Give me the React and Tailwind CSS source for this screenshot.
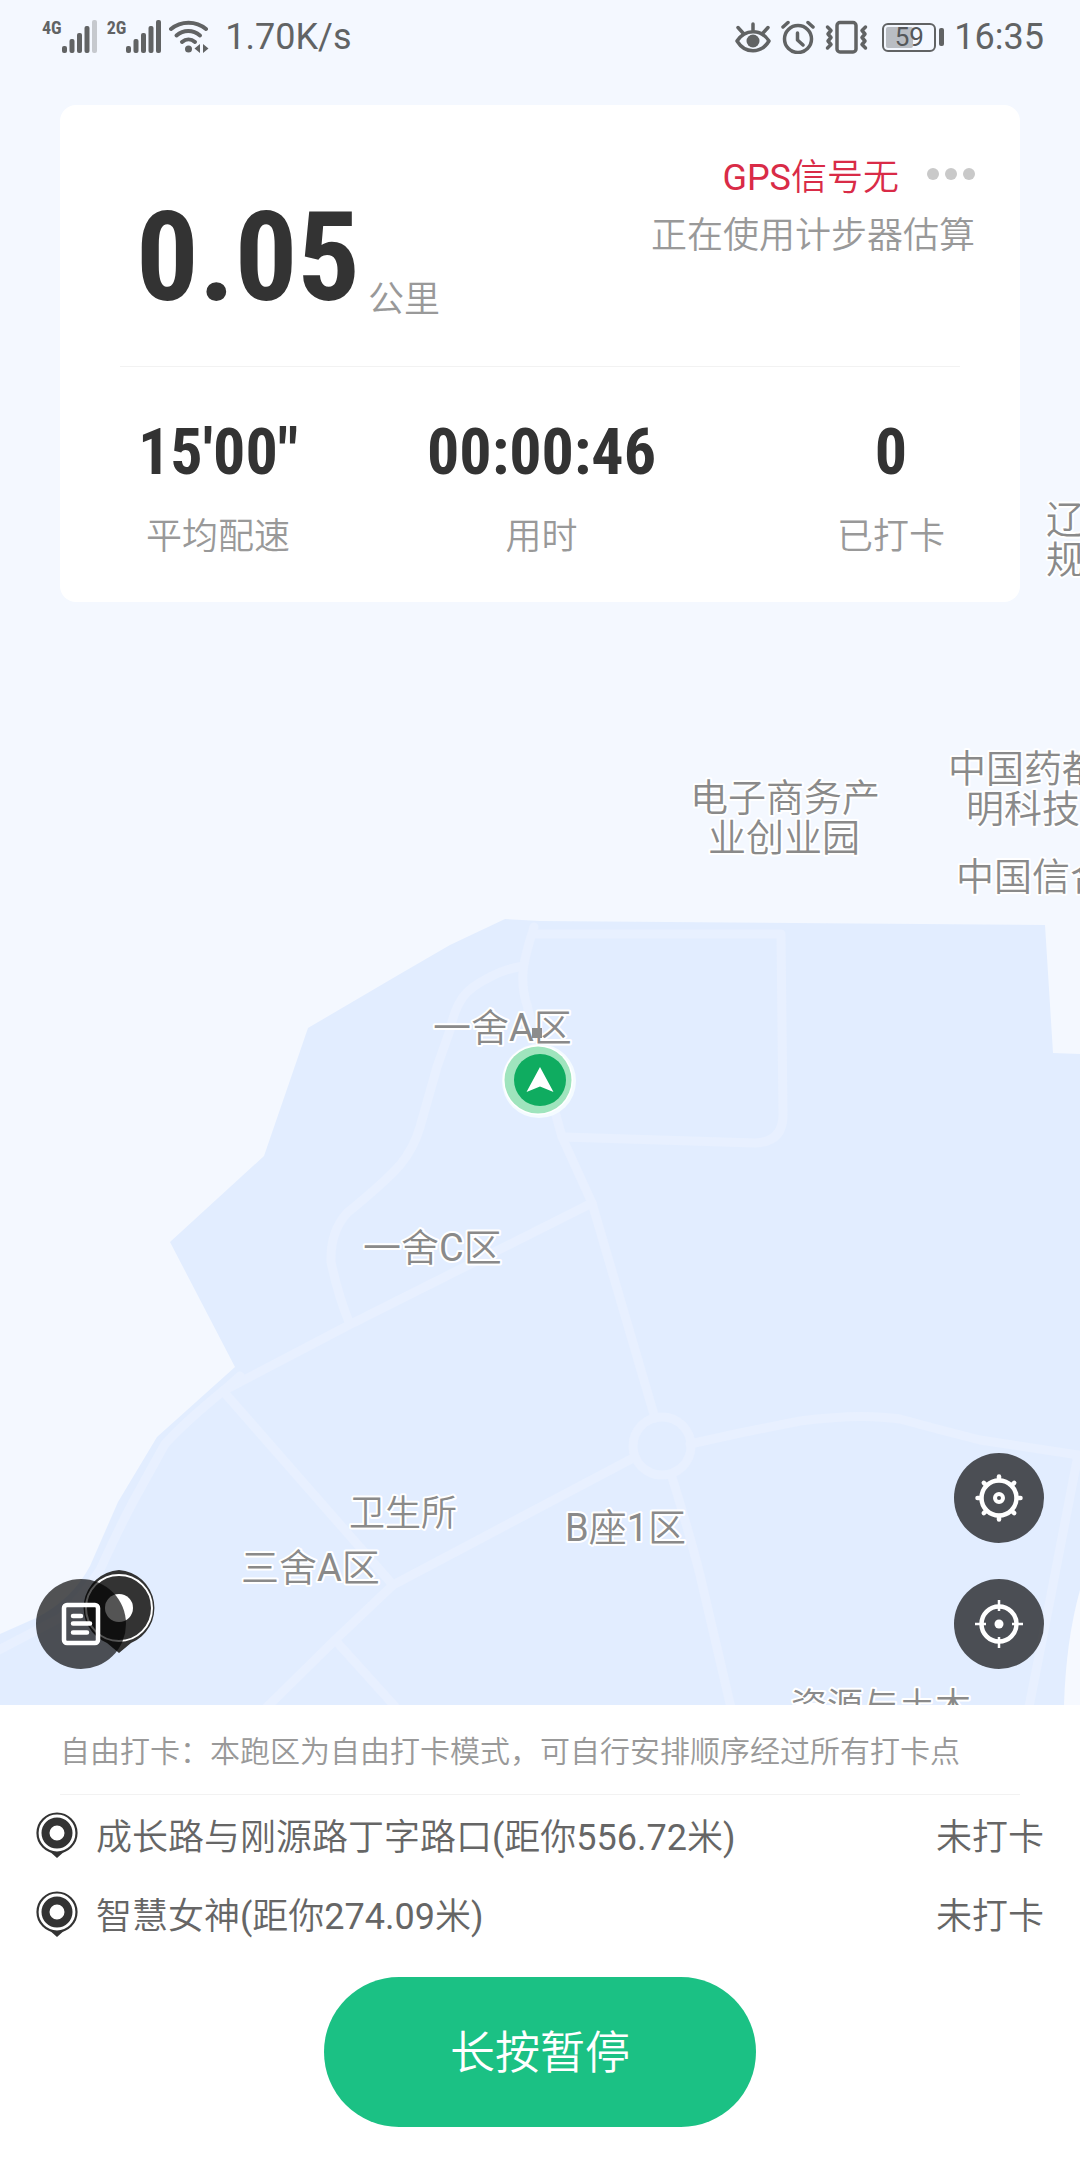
import React from "react";

const CJK = "font-['Roboto','Noto_Sans_CJK_SC_DemiLight','Noto_Sans_CJK_SC_Light','Noto_Sans_CJK_SC',sans-serif]";
const NUM = "font-['Roboto_Condensed','Liberation_Sans_Narrow','Liberation_Sans',sans-serif]";

function Signal({ label, faded }) {
  const bars = [7, 14, 20, 27, 33];
  return (
    <div className="flex items-start">
      <span className={`${NUM} text-[18px] leading-[16px] font-bold`}>{label}</span>
      <svg width="35" height="34" viewBox="0 0 35 34" aria-hidden="true">
        {bars.map((h, i) => (
          <rect
            key={h}
            x={i * 7.5}
            y={33 - h}
            width="5"
            height={h}
            rx="2"
            fill={faded && i === 4 ? "#c6c9ce" : "#616364"}
          />
        ))}
      </svg>
    </div>
  );
}

function WifiIcon() {
  return (
    <svg width="40" height="34" viewBox="0 0 40 34" fill="none" stroke="#616364" strokeWidth="4" strokeLinecap="round" aria-hidden="true">
      <path d="M2 9C12 0.5 27 0.5 37 9" />
      <path d="M7.500 15.500C14.500 9.500 24 9.500 31 15.500" />
      <path d="M13 22C17 18.500 22 18.500 26 22" />
      <circle cx="19.500" cy="29" r="3.500" fill="#616364" stroke="none" />
      <path d="M31 24V33L25.500 28.500ZM34 24V33L39.500 28.500Z" fill="#616364" stroke="none" />
    </svg>
  );
}

function EyeIcon() {
  return (
    <svg width="36" height="34" viewBox="0 0 36 34" fill="none" stroke="#616364" strokeWidth="3.500" strokeLinecap="round" aria-hidden="true">
      <path d="M2 21C10 8.500 26 8.500 34 21C26 34 10 34 2 21Z" strokeLinejoin="round" />
      <path d="M18 10V4M8 13L3 7.500M28 13L33 7.500" />
      <circle cx="18" cy="21" r="6.500" fill="#616364" stroke="none" />
    </svg>
  );
}

function AlarmIcon() {
  return (
    <svg width="34" height="34" viewBox="0 0 34 34" fill="none" stroke="#616364" strokeWidth="3.500" strokeLinecap="round" strokeLinejoin="round" aria-hidden="true">
      <circle cx="17" cy="19" r="13.500" />
      <path d="M2 7L7 2.500M32 7L27 2.500M16.500 13V20L22 25" />
    </svg>
  );
}

function VibrateIcon() {
  return (
    <svg width="43" height="34" viewBox="0 0 43 34" fill="none" stroke="#616364" strokeWidth="3.500" strokeLinejoin="round" strokeLinecap="round" aria-hidden="true">
      <rect x="12" y="2.500" width="19" height="29.500" rx="3" />
      <path d="M2.500 7L6 10.500L3 14L6 17.500L3 21L6 24.500L2.500 28" />
      <path d="M40.500 7L37 10.500L40 14L37 17.500L40 21L37 24.500L40.500 28" />
    </svg>
  );
}

function Battery() {
  return (
    <div className="flex items-center gap-[3px]">
      <div className="relative flex h-[29px] w-[54px] items-center justify-center rounded-[6px] border-2 border-[#616364]">
        <div className="absolute top-[2px] bottom-[2px] left-[2px] w-[27px] rounded-[2px] bg-[#b9bdc3]" />
        <span className="relative text-[26px] leading-[26px] text-[#55585b]">59</span>
      </div>
      <div className="h-[18px] w-[5px] rounded-[2px] bg-[#616364]" />
    </div>
  );
}

function StatusBar() {
  return (
    <header className="relative flex h-[74px] items-center justify-between pr-9 pl-[42px] text-[36px] leading-[42px] text-[#616364]">
      <div className="flex items-center">
        <Signal label="4G" faded />
        <div className="w-[10px]" />
        <Signal label="2G" />
        <div className="w-[8px]" />
        <WifiIcon />
        <span className="pl-4">1.70K/s</span>
      </div>
      <div className="flex items-center gap-[10px]">
        <EyeIcon />
        <AlarmIcon />
        <VibrateIcon />
        <div className="pl-1">
          <Battery />
        </div>
        <span>16:35</span>
      </div>
    </header>
  );
}

const ROADS = [
  "M534 927L530 940Q524 960 523 972Q522 990 527 1005L538 1050L562 1137L592 1203L655 1418",
  "M523 966Q505 969 490 977Q470 987 463 997Q454 1010 450 1030L437 1067L420 1127Q414 1148 400 1165Q385 1182 347 1213Q330 1232 331 1262Q338 1295 349 1322",
  "M592 1203L349 1325L223 1391",
  "M240 1376L223 1391Q185 1422 165 1444L134 1500Q118 1530 100 1570Q80 1600 60 1618L-5 1652",
  "M223 1391L393 1585",
  "M635 1457L393 1585L335 1640L262 1712",
  "M335 1640L400 1712",
  "M671 1474Q690 1535 700 1575L732 1712",
  "M690 1444L740 1433L800 1421Q860 1413 900 1419Q940 1430 980 1440L1085 1456",
  "M1078 1455L1050 1600L1028 1712",
  "M533 934H781L783 1115Q783 1142 755 1143L563 1137",
];

const LABELS = [
  [1046, 533, 38, "辽"],
  [1046, 573, 38, "规"],
  [690, 811, 38, "电子商务产"],
  [708, 851, 38, "业创业园"],
  [948, 782, 38, "中国药都"],
  [966, 822, 38, "明科技"],
  [956, 890, 38, "中国信合"],
  [433, 1041, 38, "一舍A区"],
  [363, 1261, 38, "一舍C区"],
  [349, 1526, 36, "卫生所"],
  [241, 1581, 38, "三舍A区"],
  [565, 1541, 38, "B座1区"],
  [791, 1719, 36, "资源与土木"],
];

function CampusMap() {
  return (
    <svg
      className="absolute inset-0 h-full w-full"
      viewBox="0 0 1080 1705"
      preserveAspectRatio="xMidYMin slice"
      role="img"
      aria-label="校园地图"
    >
      <rect width="1080" height="1705" fill="#f4f8ff" />
      <path
        d="M505 919L540 921L1045 925L1053 1053L1080 1054V1705H0V1634L36 1618Q72 1600 90 1566L118 1502L157 1437L235 1367L170 1242L264 1156L308 1028L400 974L450 945Z"
        fill="#e2edff"
      />
      <g fill="none" stroke="#e8f0ff" strokeWidth="9" strokeLinejoin="round" strokeLinecap="round">
        {ROADS.map((d) => (
          <path key={d} d={d} />
        ))}
        <circle cx="662" cy="1446" r="29" />
      </g>
      <path d="M1080 1590Q1066 1640 1064 1705H1080Z" fill="#f6f9ff" />
      <g
        className={CJK}
        fill="#8a8a8a"
        stroke="#ffffff"
        strokeWidth="4"
        strokeLinejoin="round"
        paintOrder="stroke"
      >
        {LABELS.map(([x, y, size, text]) => (
          <text key={text} x={x} y={y} fontSize={size}>
            {text}
          </text>
        ))}
      </g>
      <rect x="532" y="1028" width="10" height="10" fill="#8c8c8c" />
      <circle cx="539" cy="1081" r="37" fill="#f4fbff" />
      <circle cx="538" cy="1080" r="35" fill="#ffffff" />
      <circle cx="538" cy="1080" r="33.500" fill="#9fe4bd" />
      <circle cx="540" cy="1080" r="26" fill="#0fac60" />
      <path d="M540 1067L553.500 1092L540 1086.500L526.500 1092Z" fill="#ffffff" />
      <path d="M119 1570A38 38 0 0 1 131 1643L119 1653L107 1643A38 38 0 0 1 119 1570Z" fill="#333333" />
      <circle cx="119" cy="1608" r="33" fill="none" stroke="#ffffff" strokeWidth="2" />
      <circle cx="119" cy="1608" r="14" fill="#ffffff" />
    </svg>
  );
}

function Stat({ value, label }) {
  return (
    <div className="flex flex-col items-center">
      <dd className={`${NUM} text-[64px] leading-[72px] font-bold text-[#333333]`}>{value}</dd>
      <dt className="order-last mt-[22px] text-[36px] leading-[52px] text-[#999999]">{label}</dt>
    </div>
  );
}

function StatsCard() {
  return (
    <section className="relative mx-[60px] mt-[31px] rounded-[16px] bg-white">
      <div className="flex h-[261px] justify-between pr-[45px] pl-[76px]">
        <div className="flex items-end gap-2 pb-[40px]">
          <span className={`${NUM} text-[124px] leading-[136px] font-bold text-[#333333]`}>0.05</span>
          <span className="text-[36px] leading-[52px] text-[#999999]">公里</span>
        </div>
        <div className="flex flex-col items-end pt-[44px] text-[36px] leading-[58px] text-[#999999]">
          <div className="flex items-center gap-[28px]">
            <span className="text-[#d92b47]">GPS信号无</span>
            <button type="button" aria-label="更多" className="flex gap-[6px] pb-2">
              <span className="h-3 w-3 rounded-full bg-[#c9c9c9]" />
              <span className="h-3 w-3 rounded-full bg-[#c9c9c9]" />
              <span className="h-3 w-3 rounded-full bg-[#c9c9c9]" />
            </button>
          </div>
          <span>正在使用计步器估算</span>
        </div>
      </div>
      <div className="mx-[60px] h-px bg-[#f2f2f2]" />
      <dl className="grid grid-cols-3 pt-[50px] pr-[75px] pl-[78px] pb-[39px]">
        <div className="justify-self-start">
          <Stat value={"15'00\""} label="平均配速" />
        </div>
        <div className="justify-self-center">
          <Stat value="00:00:46" label="用时" />
        </div>
        <div className="justify-self-end">
          <Stat value="0" label="已打卡" />
        </div>
      </dl>
    </section>
  );
}

function RoundButton({ label, children }) {
  return (
    <button
      type="button"
      aria-label={label}
      className="flex h-[90px] w-[90px] items-center justify-center rounded-full bg-black/67"
    >
      {children}
    </button>
  );
}

function ListIcon() {
  return (
    <svg width="40" height="44" viewBox="0 0 40 44" fill="none" stroke="#ffffff" strokeWidth="4.500" strokeLinecap="round" aria-hidden="true">
      <rect x="3" y="3" width="34" height="38" rx="3" />
      <path d="M12 14H20M12 21.500H29M12 30.500H26" />
    </svg>
  );
}

function GearIcon() {
  return (
    <svg width="50" height="50" viewBox="-25 -25 50 50" fill="none" stroke="#ffffff" strokeWidth="4.500" strokeLinecap="round" aria-hidden="true">
      <circle r="17.500" />
      <circle r="4" strokeWidth="4" />
      {[0, 45, 90, 135, 180, 225, 270, 315].map((a) => (
        <path key={a} d="M0 -18V-21.500" transform={`rotate(${a})`} />
      ))}
    </svg>
  );
}

function TargetIcon() {
  return (
    <svg width="50" height="50" viewBox="-25 -25 50 50" fill="none" stroke="#ffffff" strokeWidth="4.500" aria-hidden="true">
      <circle r="17.500" />
      <circle r="4.500" fill="#ffffff" stroke="none" />
      <path d="M0 -13V-24M0 13V24M-13 0H-24M13 0H24" strokeWidth="2.500" />
    </svg>
  );
}

function Pin() {
  return (
    <svg width="42" height="54" viewBox="0 0 42 54" className="shrink-0" aria-hidden="true">
      <path d="M12 38L21 46L30 38Z" fill="#333333" />
      <circle cx="21" cy="21" r="19.500" fill="#ffffff" stroke="#333333" strokeWidth="2.200" />
      <circle cx="21" cy="21" r="11.500" fill="none" stroke="#333333" strokeWidth="8" />
    </svg>
  );
}

const POINTS = [
  { name: "成长路与刚源路丁字路口(距你556.72米)", state: "未打卡" },
  { name: "智慧女神(距你274.09米)", state: "未打卡" },
];

export default function App() {
  return (
    <div className={`${CJK} flex min-h-screen flex-col bg-white`}>
      <main className="relative flex flex-1 flex-col overflow-hidden">
        <CampusMap />
        <StatusBar />
        <StatsCard />
        <div className="relative mt-auto flex items-end justify-between px-9 pt-9 pb-9">
          <RoundButton label="记录">
            <ListIcon />
          </RoundButton>
          <div className="flex flex-col gap-9">
            <RoundButton label="设置">
              <GearIcon />
            </RoundButton>
            <RoundButton label="定位">
              <TargetIcon />
            </RoundButton>
          </div>
        </div>
      </main>
      <footer className="flex flex-col bg-white pb-[33px]">
        <p className="mx-[60px] border-b border-[#f2f2f2] pt-[25px] pb-[20px] text-[30px] leading-[44px] text-[#999999]">
          自由打卡：本跑区为自由打卡模式，可自行安排顺序经过所有打卡点
        </p>
        <ul className="px-9 pt-1 text-[36px] leading-[79px] text-[#666666]">
          {POINTS.map((p) => (
            <li key={p.name} className="flex items-center">
              <Pin />
              <span className="flex-1 pl-[18px]">{p.name}</span>
              <span>{p.state}</span>
            </li>
          ))}
        </ul>
        <button
          type="button"
          className="mt-5 h-[150px] w-[432px] self-center rounded-full bg-[#1bc184] pt-1 text-[45px] text-white"
        >
          长按暂停
        </button>
      </footer>
    </div>
  );
}
